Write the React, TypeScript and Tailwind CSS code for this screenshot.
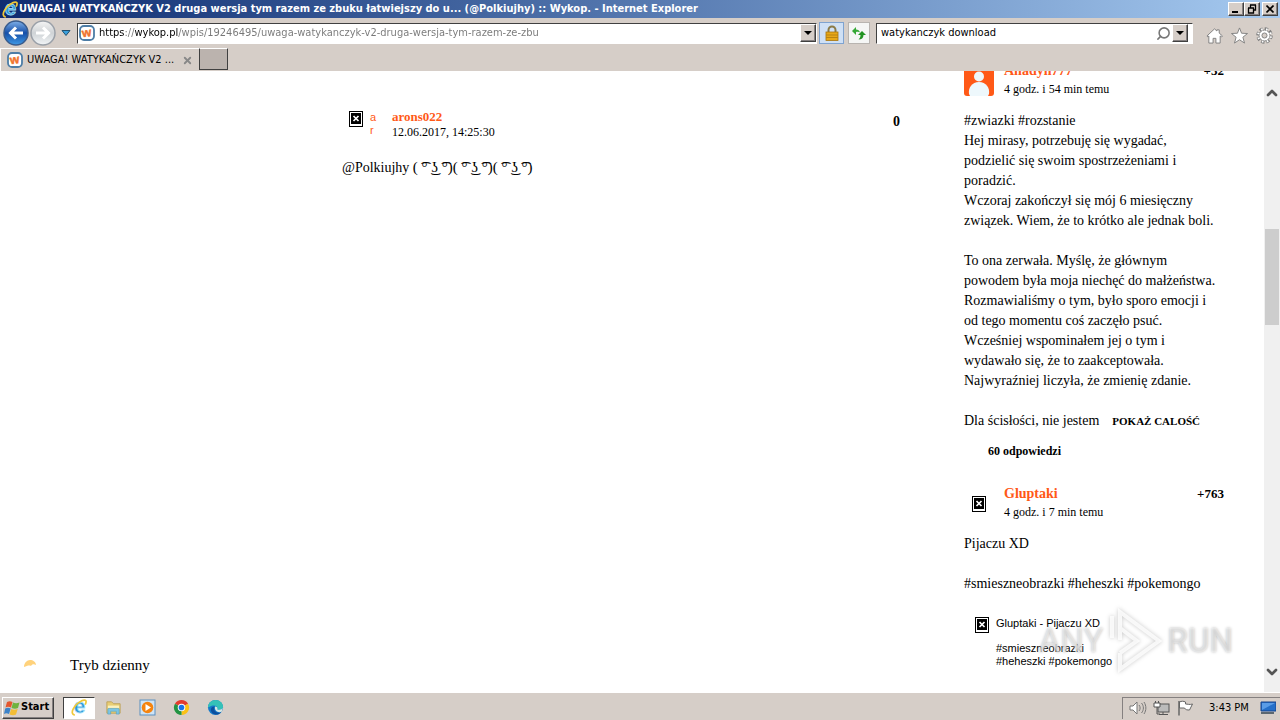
import { useState } from "react";
import type { ReactNode } from "react";
import { ChevronDown, ChevronUp, Search, X } from "lucide-react";

const raised =
  "bg-[#d6cec8] border border-t-white border-l-white border-r-[#404040] border-b-[#404040] shadow-[inset_-1px_-1px_0_#858080]";

function IeLogo({ className }: { className: string }) {
  return (
    <svg viewBox="0 0 18 18" className={className} aria-hidden="true">
      <text x="3" y="15" fontSize="22" fontWeight="bold" fontFamily="Liberation Sans, sans-serif" fill="#2b94d6" stroke="#a8e0f8" strokeWidth="0.8">
        e
      </text>
      <path d="M4 17C-2 16 3 6 11 2c5-2 6 0 4 4" fill="none" stroke="#f0c838" strokeWidth="1.8" />
    </svg>
  );
}

function WykopIcon() {
  return (
    <svg viewBox="0 0 16 16" className="size-4 shrink-0" aria-hidden="true">
      <rect x="1" y="1" width="14" height="14" rx="4" fill="#fff" stroke="#4d7da6" strokeWidth="1.8" />
      <text x="3" y="11.5" fontSize="12" fontWeight="bold" fontFamily="Liberation Sans, sans-serif" fill="#f0732d" stroke="#f0732d" strokeWidth="0.5" transform="rotate(-8 8 8)">
        w
      </text>
    </svg>
  );
}

function BrokenImage() {
  return (
    <svg viewBox="0 0 14 16" className="h-4 w-[14px] shrink-0" aria-hidden="true">
      <rect x="0.5" y="0.5" width="13" height="15" fill="#fff" stroke="#000" />
      <rect x="2" y="2" width="10" height="11" fill="#000" />
      <path d="M4.5 5l5 5M9.5 5l-5 5" stroke="#fff" strokeWidth="1.7" />
    </svg>
  );
}

function Avatar() {
  return (
    <svg viewBox="0 0 30 30" className="size-[30px]" aria-hidden="true">
      <rect width="30" height="30" rx="3" fill="#ff5917" />
      <circle cx="15" cy="10.5" r="5" fill="#eef8fc" />
      <path d="M5 28c-1-6 3-12 10-12s11 6 10 12l-1 2H6z" fill="#eef8fc" />
    </svg>
  );
}

function TitleBar() {
  return (
    <header className="flex h-[18px] shrink-0 items-center bg-linear-to-r from-[#0f2b70] to-[#a6caf0] pr-[2px] pl-[2px] text-white">
      <IeLogo className="size-[17px] shrink-0" />
      <h1 className="flex-1 truncate text-[11px] font-bold">
        UWAGA! WATYKAŃCZYK V2 druga wersja tym razem ze zbuku łatwiejszy do u... (@Polkiujhy) :: Wykop. - Internet Explorer
      </h1>
      <button aria-label="Minimize" className={`${raised} flex h-[14px] w-4 items-end pb-[2px] pl-[3px]`}>
        <span className="h-[2px] w-[6px] bg-black" />
      </button>
      <button aria-label="Restore" className={`${raised} flex h-[14px] w-4 items-center justify-center`}>
        <svg viewBox="0 0 10 10" className="size-[10px]" fill="none" stroke="#000">
          <path d="M3 1h6M3.5 1v3M8.5 1v5H7M1 4h6M1.5 4v5h5V4" strokeWidth="1.3" />
        </svg>
      </button>
      <button aria-label="Close" className={`${raised} ml-[2px] flex h-[14px] w-4 items-center justify-center`}>
        <svg viewBox="0 0 8 8" className="size-2" stroke="#000" strokeWidth="1.6">
          <path d="M0.5 0.5l7 7M7.5 0.5l-7 7" />
        </svg>
      </button>
    </header>
  );
}

function RoundArrow({ active }: { active?: boolean }) {
  return (
    <svg viewBox="0 0 26 26" className="size-[26px]" aria-hidden="true">
      <defs>
        <linearGradient id={active ? "back" : "forward"} x1="0" y1="0" x2="0" y2="1">
          <stop offset="0" stopColor={active ? "#7fb0e8" : "#f5f5f5"} />
          <stop offset="0.5" stopColor={active ? "#164fa8" : "#cfd3d6"} />
          <stop offset="1" stopColor={active ? "#3f9ae6" : "#f2f5f7"} />
        </linearGradient>
      </defs>
      <circle cx="13" cy="13" r="12" fill={active ? "url(#back)" : "url(#forward)"} stroke={active ? "#3a5c8c" : "#9aa0a8"} strokeWidth="1.5" />
      <path
        d={active ? "M20 13H8M13 7.5L7.5 13l5.5 5.5" : "M6 13h12M13 7.5l5.5 5.5L13 18.5"}
        fill="none"
        stroke="#fff"
        strokeWidth="3"
      />
    </svg>
  );
}

function DropButton({ label }: { label: string }) {
  return (
    <button aria-label={label} className={`${raised} flex h-[18px] w-4 shrink-0 items-center justify-center`}>
      <svg viewBox="0 0 8 4" className="h-1 w-2">
        <path d="M0 0h8L4 4z" />
      </svg>
    </button>
  );
}

function NavBar() {
  const [query, setQuery] = useState("watykanczyk download");
  const field = "flex h-[21px] items-center border border-t-[#404040] border-l-[#404040] border-r-white border-b-white bg-white";

  return (
    <nav className="flex h-7 shrink-0 items-center pt-[2px] pr-[7px] pl-[3px]">
      <button aria-label="Back"><RoundArrow active /></button>
      <button aria-label="Forward" className="ml-[1px]"><RoundArrow /></button>
      <button aria-label="Recent pages" className="mx-[3px] flex w-[13px] justify-center">
        <svg viewBox="0 0 10 6" className="h-[6px] w-[10px]">
          <path d="M1 .5h8L5 5.5z" fill="#3ba0dc" stroke="#21506f" />
        </svg>
      </button>
      <div className={`${field} ml-[2px] flex-1 pl-[1px]`}>
        <WykopIcon />
        <input
          aria-label="Address"
          readOnly
          value="https://wykop.pl/wpis/19246495/uwaga-watykanczyk-v2-druga-wersja-tym-razem-ze-zbu"
          className="ml-1 min-w-0 flex-1 bg-[linear-gradient(90deg,#000_25px,#777_25px,#777_36px,#000_36px,#000_79px,#777_79px)] bg-clip-text text-[11px] text-transparent outline-none"
        />
        <DropButton label="Show address history" />
      </div>
      <button aria-label="Security report" className="ml-[2px] flex h-[22px] w-[25px] items-center justify-center border border-[#7fa3d0] bg-[#cfe0f5]">
        <svg viewBox="0 0 14 16" className="h-4 w-[14px]">
          <path d="M3.5 8V5a3.5 3.5 0 0 1 7 0v3" fill="none" stroke="#8a7a48" strokeWidth="2" />
          <rect x="1" y="7" width="12" height="8.5" fill="#e8a818" stroke="#a87410" strokeWidth=".8" />
          <path d="M1 10h12M1 12.5h12" stroke="#b98312" />
        </svg>
      </button>
      <button aria-label="Refresh" className="ml-1 flex size-[22px] items-center justify-center border border-[#b8b4b0] bg-[#f5f6f5]">
        <svg viewBox="0 0 16 14" className="h-[14px] w-4">
          <path d="M1 5l4-4v2.5c2 0 3.5 1 4 3-1-1-2.5-1-4-.5V9z" fill="#35a835" />
          <path d="M15 9l-4-4-4 4h2.5c0 2-.5 3-2 4.5 3 0 5-1.500 5-4.500z" fill="#229322" />
        </svg>
      </button>
      <div className={`${field} ml-[6px] w-[317px] pl-1`}>
        <input
          aria-label="Search"
          value={query}
          onChange={(e) => setQuery(e.target.value)}
          className="min-w-0 flex-1 text-[11px] text-black outline-none"
        />
        <Search className="mr-[1px] size-[15px] -scale-x-100 text-[#777]" strokeWidth={2.5} />
        <DropButton label="Search options" />
        <span className="w-1" />
      </div>
      <div className="ml-[13px] flex items-center gap-2 pt-1">
        <button aria-label="Home">
          <svg viewBox="0 0 18 18" className="size-[17px]">
            <path d="M1 9.5L9 2l2.5 2.2V3H14v3.5l3.500 3-1 1-1.500-1V17h-4.500v-5h-3v5H3V9.500l-1 1z" fill="#fff" stroke="#808080" strokeLinejoin="round" />
          </svg>
        </button>
        <button aria-label="Favorites">
          <svg viewBox="0 0 18 18" className="size-[17px]">
            <path d="M9 1l2.200 5.600 6.300.3-4.900 3.900 1.700 6.200L9 13.500 3.700 17l1.700-6.200L.5 6.900l6.300-.3z" fill="#fff" stroke="#808080" strokeLinejoin="round" />
          </svg>
        </button>
        <button aria-label="Tools">
          <svg viewBox="0 0 18 18" className="size-[17px]">
            <circle cx="9" cy="9" r="7" fill="none" stroke="#808080" strokeWidth="3.500" strokeDasharray="3.400 2.098" />
            <circle cx="9" cy="9" r="5.800" fill="#fff" stroke="#808080" />
            <circle cx="9" cy="9" r="6.800" fill="none" stroke="#fff" strokeWidth="2.200" strokeDasharray="1.600 3.740" strokeDashoffset="-.9" />
            <circle cx="9" cy="9" r="2.700" fill="#d6cec8" stroke="#808080" />
          </svg>
        </button>
      </div>
    </nav>
  );
}

function TabBar() {
  return (
    <div className="flex h-[25px] shrink-0 items-stretch pt-[2px]">
      <div className="flex w-[199px] items-center border-t border-l border-white pr-[6px] pl-[6px]">
        <WykopIcon />
        <a href="#" className="ml-1 flex-1 truncate text-[11px]">UWAGA! WATYKAŃCZYK V2 ...</a>
        <button aria-label="Close tab"><X className="size-[11px] text-[#888]" strokeWidth={4} /></button>
      </div>
      <button aria-label="New tab" className="mb-[1px] w-[29px] border border-t-white border-l-[#404040] border-r-[#404040] border-b-[#404040] bg-[#bbb3ae]" />
    </div>
  );
}

type PostProps = {
  author: string;
  time: string;
  votes: string;
  avatar: ReactNode;
  children: ReactNode;
};

function SidebarPost({ author, time, votes, avatar, children }: PostProps) {
  return (
    <article>
      <header className="flex h-9">
        <div className="mt-[5px] flex size-[30px] items-center justify-center">{avatar}</div>
        <div className="ml-[10px] flex-1">
          <a href="#" className="block text-[14px] leading-5 font-bold text-[#ff5917]">{author}</a>
          <p className="text-[12px] leading-4">{time}</p>
        </div>
        <span className="text-[13px] leading-5 font-bold">{votes}</span>
      </header>
      {children}
    </article>
  );
}

function Sidebar() {
  return (
    <aside className="-mt-[10px] w-[260px] shrink-0 text-[14px] leading-5">
      <SidebarPost author="Anadyn777" time="4 godz. i 54 min temu" votes="+32" avatar={<Avatar />}>
        <div className="mt-[14px]">
          <p><a href="#">#zwiazki</a> <a href="#">#rozstanie</a></p>
          <p>
            Hej mirasy, potrzebuję się wygadać,<br />podzielić się swoim spostrzeżeniami i<br />poradzić.
          </p>
          <p>
            Wczoraj zakończył się mój 6 miesięczny<br />związek. Wiem, że to krótko ale jednak boli.
          </p>
          <p className="mt-5">
            To ona zerwała. Myślę, że głównym<br />powodem była moja niechęć do małżeństwa.<br />
            Rozmawialiśmy o tym, było sporo emocji i<br />od tego momentu coś zaczęło psuć.<br />
            Wcześniej wspominałem jej o tym i<br />wydawało się, że to zaakceptowała.<br />
            Najwyraźniej liczyła, że zmienię zdanie.
          </p>
          <p className="mt-5 flex">
            Dla ścisłości, nie jestem <a href="#" className="ml-[13px] text-[11px] font-bold">POKAŻ CALOŚĆ</a>
          </p>
        </div>
        <a href="#" className="mt-[10px] ml-6 block text-[12px] font-bold">60 odpowiedzi</a>
      </SidebarPost>
      <div className="mt-[23px]">
        <SidebarPost author="Gluptaki" time="4 godz. i 7 min temu" votes="+763" avatar={<BrokenImage />}>
          <p className="mt-[14px]">Pijaczu XD</p>
          <p className="mt-5"><a href="#">#smieszneobrazki</a> <a href="#">#heheszki</a> <a href="#">#pokemongo</a></p>
          <a href="#" className="mt-[23px] ml-[11px] flex gap-[7px] font-['Liberation_Sans',sans-serif] text-[11px] leading-[13px]">
            <BrokenImage />
            <span className="w-[125px]">
              <span className="mb-3 block">Gluptaki - Pijaczu XD</span>
              #smieszneobrazki #heheszki #pokemongo
            </span>
          </a>
        </SidebarPost>
      </div>
    </aside>
  );
}

function Page() {
  return (
    <div className="flex min-w-0 flex-1 overflow-hidden font-['Liberation_Serif','DejaVu_Sans',serif]">
      <div className="flex w-[342px] shrink-0 flex-col justify-end pb-[17px] pl-6">
        <button className="flex items-center gap-[34px] text-[15px] leading-5">
          <svg viewBox="0 0 12 12" className="size-3" aria-hidden="true">
            <path d="M0 8C0 4 3 1 6 1s6 2 6 5c-2-1-4-1-5 1-2-1-4 0-7 1z" fill="#ffd27c" />
          </svg>
          Tryb dzienny
        </button>
      </div>
      <main className="min-w-0 flex-1 pt-[38px]">
        <article>
          <header className="flex">
            <a href="#" className="ml-[7px] flex w-[43px] gap-[7px] pt-[2px] font-['Liberation_Sans',sans-serif] text-[11px] leading-[13px] text-[#ff5917]">
              <BrokenImage />
              <span className="w-2 break-all">ar</span>
            </a>
            <div className="flex-1">
              <a href="#" className="block text-[13px] leading-4 font-bold text-[#ff5917]">arons022</a>
              <time className="block text-[12px] leading-[14px]">12.06.2017, 14:25:30</time>
            </div>
            <span className="text-[14px] leading-[26px] font-bold">0</span>
          </header>
          <p className="mt-[18px] text-[14px] leading-5">
            <a href="#">@Polkiujhy</a> <span className="text-[15px]">( ͡° ͜ʖ ͡°)( ͡° ͜ʖ ͡°)( ͡° ͜ʖ ͡°)</span>
          </p>
        </article>
      </main>
      <div className="mr-10 ml-16 flex shrink-0">
        <Sidebar />
      </div>
    </div>
  );
}

function ScrollBar() {
  return (
    <div className="flex w-4 shrink-0 flex-col items-center bg-[#f0f0f0] pt-[14px] pb-3 text-[#555]">
      <button aria-label="Scroll up"><ChevronUp className="size-4" strokeWidth={4} /></button>
      <div className="flex w-full flex-1 flex-col px-[1px] pt-32">
        <div className="h-24 bg-[#cdcdcd]" />
      </div>
      <button aria-label="Scroll down"><ChevronDown className="size-4" strokeWidth={4} /></button>
    </div>
  );
}

function Watermark() {
  return (
    <div
      aria-hidden="true"
      className="pointer-events-none absolute right-[47px] bottom-[18px] flex items-center font-['Roboto',sans-serif] text-[33px] leading-[60px] text-white/40 [text-shadow:0_0_3px_#bbb]"
    >
      <span>ANY</span>
      <svg viewBox="0 0 56 66" className="mx-1 h-[66px] w-14 drop-shadow-[0_0_2px_#bbb]" fill="none" stroke="#fff" strokeOpacity=".8" strokeWidth="4">
        <path d="M13 45v16l39-28L13 4v28M5 8v22M13 45l17-12-17-13" />
      </svg>
      <span className="font-medium">RUN</span>
    </div>
  );
}

function TaskBar() {
  return (
    <footer className="flex h-7 shrink-0 items-center border-t border-white bg-[#d6cec8] pt-[2px] pl-[2px] shadow-[0_-1px_0_#d6cec8]">
      <button className={`${raised} flex h-[22px] w-[52px] items-center gap-[1px] pl-[1px] text-[11px] font-bold`}>
        <svg viewBox="0 0 16 16" className="size-4 shrink-0" aria-hidden="true">
          <path d="M3 2c2-1 3.5-1 5.5 0L7 7.5C5 6.5 3 6.5 1.5 7.5z" fill="#e4572e" />
          <path d="M9 2.5c2 1 4 1 6.5 0L14 8c-2 1-4 1-6.5 0z" fill="#6fb33f" />
          <path d="M1.2 8.5c2-1 3.5-1 5.5 0L5 14c-2-1-3.5-1-5 0z" fill="#3c83c9" />
          <path d="M7.2 9c2 1 4 1 6.5 0L12 14.5c-2 1-4 1-6.5 0z" fill="#f2bd34" />
        </svg>
        Start
      </button>
      <button aria-label="Internet Explorer" className="ml-[9px] flex h-[22px] w-8 items-center justify-center border border-t-[#404040] border-l-[#404040] border-r-white border-b-white bg-white">
        <IeLogo className="size-[17px]" />
      </button>
      <button aria-label="File Explorer" className="ml-[10px]">
        <svg viewBox="0 0 18 18" className="size-[17px]">
          <path d="M2 3h5l2 2h7v10H2z" fill="#e9ce74" stroke="#bda35a" />
          <path d="M3 7h12v3H3z" fill="#fbf1be" />
          <path d="M3 16v-5q0-1 1-1h10q1 0 1 1v5h-3v-3H6v3z" fill="#7cc5e4" stroke="#4d9fc4" strokeWidth=".6" />
        </svg>
      </button>
      <button aria-label="Media Player" className="ml-[17px]">
        <svg viewBox="0 0 17 17" className="size-[17px]">
          <rect x="1" y="1" width="15" height="15" fill="#cfe4f6" stroke="#5b8fc0" />
          <circle cx="8.5" cy="8.5" r="5.8" fill="#f58410" />
          <path d="M6.5 5l5.5 3.5L6.5 12z" fill="#fff" />
        </svg>
      </button>
      <button aria-label="Chrome" className="ml-[17px]">
        <svg viewBox="0 0 18 18" className="size-[17px]">
          <path d="M9 9L2.07 5A8 8 0 0 1 15.93 5z" fill="#e33b2e" />
          <path d="M9 9L15.93 5A8 8 0 0 1 9 17z" fill="#fbc116" />
          <path d="M9 9v8A8 8 0 0 1 2.07 5z" fill="#229342" />
          <circle cx="9" cy="9" r="4" fill="#fff" />
          <circle cx="9" cy="9" r="3" fill="#1a73e8" />
        </svg>
      </button>
      <button aria-label="Edge" className="ml-[17px]">
        <svg viewBox="0 0 18 18" className="size-[17px]">
          <circle cx="9" cy="9" r="8" fill="#1479c9" />
          <path d="M1 9c0-5 4-8 8-8s8 3 8 7c0 3-3 4-6 3 1-4-4-6-10-2z" fill="#35c1b8" />
          <path d="M8 8c-2 4 2 8 7 6-3 4-10 3-11-2 0-3 2-4 4-4z" fill="#0c4f9e" />
          <path d="M8.5 8c2 0 3 1 2.5 3 2 1 5 0 6-2l-1.5 4.5c-4 1.5-8-1-7-5.5z" fill="#d6e7e5" />
        </svg>
      </button>
      <div className="ml-auto flex h-[22px] w-[158px] items-center border-t border-l border-[#858080] pr-1 pl-[6px] text-[11px]">
        <svg viewBox="0 0 18 16" className="h-4 w-[18px]" fill="none" stroke="#777" aria-hidden="true">
          <path d="M1 6h3l4-4v12l-4-4H1z" fill="#fff" />
          <path d="M10 5c1.5 2 1.5 4 0 6M12.5 3c2.5 3 2.5 7 0 10M15 2c2.5 4 2.5 8 0 12" />
        </svg>
        <svg viewBox="0 0 18 16" className="ml-[6px] h-4 w-[18px]" fill="none" stroke="#555" aria-hidden="true">
          <rect x="5" y="4" width="11" height="8" fill="#bbb" />
          <path d="M6 14.5h9M10 12v2" />
          <path d="M1 3h6v4H1z" fill="#fff" />
          <path d="M2.5 1v2M5.5 1v2M4 7v7h3" />
        </svg>
        <svg viewBox="0 0 18 16" className="ml-[6px] h-4 w-[18px]" fill="none" stroke="#666" aria-hidden="true">
          <path d="M2.5 2c2-1 4-1 6 0v2c2 0 4 1 7 0l-3 6c-2 0-4 0-5-2h-5z" fill="#fff" />
          <path d="M2 1v14.5" strokeWidth="1.5" />
        </svg>
        <time className="ml-[14px] flex-1">3:43 PM</time>
        <button aria-label="Show desktop">
          <svg viewBox="0 0 16 14" className="h-[14px] w-4">
            <path d="M1 1h15v9H1z" fill="#246fc9" stroke="#17458d" />
            <path d="M2 2h13L2 9z" fill="#5a9ce6" />
            <path d="M1 12h13" stroke="#345" strokeWidth="1.5" />
          </svg>
        </button>
      </div>
    </footer>
  );
}

export default function App() {
  return (
    <div className="flex h-screen flex-col overflow-hidden bg-[#d6cec8] font-['DejaVu_Sans_Condensed','DejaVu_Sans',sans-serif] text-black">
      <TitleBar />
      <NavBar />
      <TabBar />
      <div className="relative flex min-h-0 flex-1 bg-white">
        <Page />
        <ScrollBar />
        <Watermark />
      </div>
      <TaskBar />
    </div>
  );
}
